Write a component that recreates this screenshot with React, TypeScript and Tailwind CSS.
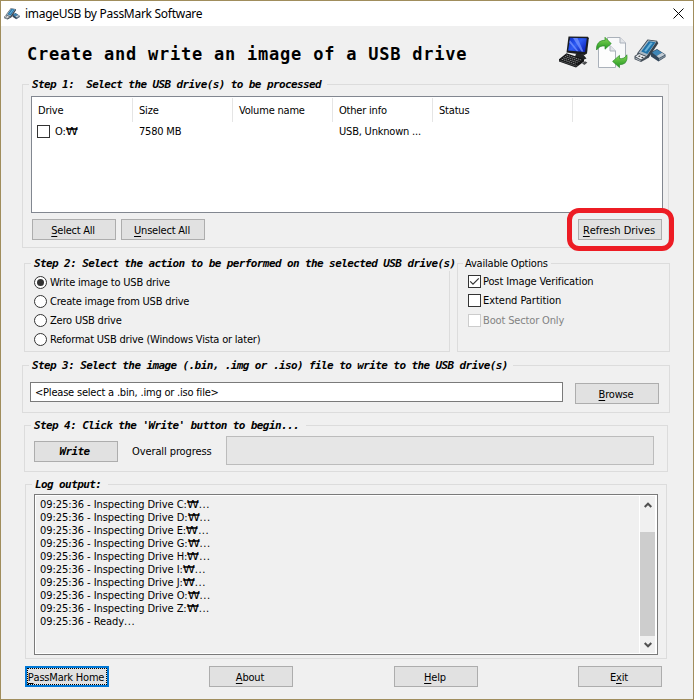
import type { ReactNode } from 'react';
import { clsx } from 'clsx';

const columns = [
  { label: 'Drive', value: 'O:', className: 'w-[101px]' },
  { label: 'Size', value: '7580 MB', className: 'w-[100px]' },
  { label: 'Volume name', value: '', className: 'w-[100px]' },
  { label: 'Other info', value: 'USB, Unknown ...', className: 'w-[100px]' },
  { label: 'Status', value: '', className: 'w-[140px]' },
];

const actions = [
  { label: 'Write image to USB drive', className: 'h-[19px]' },
  { label: 'Create image from USB drive', className: 'h-[18px]' },
  { label: 'Zero USB drive', className: 'h-[20px]' },
  { label: 'Reformat USB drive (Windows Vista or later)', className: 'h-[19px]' },
];

const drives = ['C', 'D', 'E', 'G', 'H', 'I', 'J', 'O', 'Z'];

const monoLabel =
  "font-['DejaVu_Sans_Mono'] text-[11px] font-bold italic tracking-[-0.6px]";

const Group = ({
  title,
  plain = false,
  className,
  legendClassName,
  children,
}: {
  title: string;
  plain?: boolean;
  className?: string;
  legendClassName?: string;
  children: ReactNode;
}) => (
  <section className={clsx('relative shrink-0 border border-[#dcdcdc]', className)}>
    <h2
      className={clsx(
        'absolute -top-[8px] h-[15px] whitespace-pre bg-[#f0f0f0] leading-[15px]',
        !plain && monoLabel,
        legendClassName,
      )}
    >
      {title}
    </h2>
    {children}
  </section>
);

const Button = ({
  text,
  hotkey = 0,
  className,
}: {
  text: string;
  hotkey?: number;
  className?: string;
}) => (
  <button
    className={clsx(
      'flex h-[21px] w-[84px] shrink-0 items-center justify-center whitespace-pre border border-[#adadad] bg-[#e1e1e1] pr-[2px] pt-px',
      className,
    )}
  >
    {text.slice(0, hotkey)}
    <span className="underline underline-offset-2">{text[hotkey]}</span>
    {text.slice(hotkey + 1)}
  </button>
);

const Won = () => (
  <span className="inline-flex w-[12px] justify-center">
    <span className="scale-x-125">₩</span>
  </span>
);

const Check = ({
  checked = false,
  disabled = false,
}: {
  checked?: boolean;
  disabled?: boolean;
}) => (
  <span
    className={clsx(
      'h-[13px] w-[13px] shrink-0 border bg-white',
      disabled ? 'border-[#cccccc]' : 'border-[#333333]',
    )}
  >
    {checked && (
      <svg viewBox="0 0 11 11" className="h-[11px] w-[11px]" fill="none">
        <path d="M1.2 5.3 4 8.1 9.8 2.3" stroke="#333" strokeWidth="1.2" />
      </svg>
    )}
  </span>
);

const Radio = ({ selected }: { selected: boolean }) => (
  <span className="flex h-[13px] w-[13px] shrink-0 items-center justify-center rounded-full border border-[#333333] bg-white">
    {selected && <span className="h-[7px] w-[7px] rounded-full bg-[#333333]" />}
  </span>
);

const UsbIcon = ({ className }: { className: string }) => (
  <svg viewBox="0 0 32 24" className={className}>
    <path d="M16.5 13.5 23 10 31.5 15.5V18L24.5 22.5 17 17.5Z" fill="#33475a" />
    <path d="M18 13.5 23 10.6 28 13.8 22.5 17Z" fill="#3f86b6" />
    <path d="M22.5 17 28 13.8 31 15.8 25 19Z" fill="#c2cdd6" />
    <path d="M25 19.5 31 16.5V17.8L25 21.4Z" fill="#7e8d99" />
    <path d="M13.5 0.5 23 1.8 24.3 4.2 14.5 19 11.5 20 3 14.5Z" fill="#38434e" />
    <path d="M14 1.2 22.6 2.4 12.4 17.4 4.2 14.2Z" fill="#a9b8c4" />
    <path d="M14.8 2.2 21.6 3.2 13.4 15 7.2 12.6Z" fill="#2072a8" />
    <path d="M16.6 3.6 18.8 3.9 12 12.8 10.2 12.1Z" fill="#6ab2d8" />
    <path d="M0.5 17 5 14 13 17.2 12.5 20 7 23 0.5 20.3Z" fill="#46505a" />
    <path d="M1.5 17.4 5.2 15 11.8 17.8 7 20.6Z" fill="#e8ebee" />
    <path d="M1.5 18.4 6.6 21.2V22.2L1.5 19.8Z" fill="#b7bec5" />
    <path d="M4 17.2 5.5 16.4 6.8 17 5.2 17.9ZM7 18.6 8.6 17.7 9.8 18.3 8.2 19.2Z" fill="#333" />
  </svg>
);

const ComputerIcon = () => (
  <svg viewBox="0 0 30 32" className="h-8 w-[30px]">
    <defs>
      <linearGradient id="screen" x1="0" y1="0" x2="1" y2="0.8">
        <stop offset="0" stopColor="#0b2fd0" />
        <stop offset="0.5" stopColor="#2f5df5" />
        <stop offset="1" stopColor="#0c1fb4" />
      </linearGradient>
    </defs>
    <path d="M9.5 0.5 29 0.8 29.8 2.2 28 17.5 25.5 19 7.5 16.5Z" fill="#1b1d20" />
    <path d="M11 1.8 27.8 2.2 26 16 9.2 14.4Z" fill="url(#screen)" />
    <path d="M14 2 18.5 2.1 24.5 15.8 22.5 15.6ZM10.8 4 19.5 15.3 17.5 15.1 10.2 6.5Z" fill="#7594ff" opacity="0.75" />
    <path d="M17 17.5 24 18.3 27.5 22.5 24 24 16 21Z" fill="#222426" />
    <path d="M0 23.2 7.5 17.2 25 23.2V25.6L17 31.4 0 25.6Z" fill="#131415" />
    <path d="M2.6 23.2 16.8 28.2M4.2 21.8 18.6 26.8M5.8 20.4 20.4 25.4M7.4 19 22.2 24" stroke="#a3a5a7" strokeWidth="0.8" strokeDasharray="1.7 0.7" />
    <path d="M0.5 24.6 16.8 30 18.5 29.2" stroke="#6c6e70" strokeWidth="0.6" fill="none" />
    <path d="M23 27.2 26 25.2 28.4 26.4 25.4 29Z" fill="#4c4e50" />
  </svg>
);

const PagesIcon = () => (
  <svg viewBox="0 0 32 33" className="h-[33px] w-8">
    <defs>
      <linearGradient id="arrow" x1="0" y1="0" x2="0" y2="1">
        <stop offset="0" stopColor="#86d955" />
        <stop offset="1" stopColor="#1f9420" />
      </linearGradient>
    </defs>
    <path d="M11.5 1.5H24L29.5 7V27H11.5Z" fill="#f8f9fa" stroke="#aab1ba" />
    <path d="M24 1.5V7H29.5" fill="#e2e5e9" stroke="#aab1ba" />
    <path d="M2.5 9.5H14L19.5 15V31.5H2.5Z" fill="#fdfdfd" stroke="#aab1ba" />
    <path d="M14 9.5V15H19.5" fill="#e2e5e9" stroke="#aab1ba" />
    <path d="M0.6 14C0 8 3.5 4 9 4.4V1.3L15.2 7.6 9 13.2V10C5.5 9.4 2.5 11 0.6 14Z" fill="url(#arrow)" stroke="#2a8a26" strokeWidth="0.7" />
    <path d="M30.8 18.8C32 25.5 28.5 28.8 23.5 28.6V31.6L16.6 25.4 23.5 19.4V22.6C26.5 22.9 29.5 22 30.8 18.8Z" fill="url(#arrow)" stroke="#2a8a26" strokeWidth="0.7" />
  </svg>
);

const Chevron = ({ down = false }: { down?: boolean }) => (
  <svg viewBox="0 0 8 6" className={clsx('h-[6px] w-2', down && 'rotate-180')} fill="none">
    <path d="M0.7 5 4 1.7 7.3 5" stroke="#505050" strokeWidth="2" />
  </svg>
);

export default function App() {
  return (
    <div className="h-[700px] w-[695px] overflow-hidden bg-white">
      <main className="flex h-[700px] w-[694px] flex-col border border-[#a08d5c] bg-[#f0f0f0] font-['DejaVu_Sans_Condensed','DejaVu_Sans',sans-serif] text-[11px] leading-[13px] tracking-[-0.2px] text-black">
        <header className="flex h-[25px] shrink-0 items-center bg-white pl-[3px] pr-[9px]">
          <UsbIcon className="h-3 w-4" />
          <span className="ml-[5px] flex-1 font-['Noto_Sans'] text-[12px] tracking-[-0.28px]">
            imageUSB by PassMark Software
          </span>
          <svg viewBox="0 0 11 11" className="h-[11px] w-[11px]">
            <path d="M0.5 0.5 10.5 10.5M10.5 0.5 0.5 10.5" stroke="#000" />
          </svg>
        </header>

        <div className="flex h-[58px] shrink-0 items-start pl-[26px] pt-[10px]">
          <h1 className="w-[532px] whitespace-nowrap pt-[8px] font-['DejaVu_Sans_Mono'] text-[17px] font-bold leading-[20px] tracking-[0.77px]">
            Create and write an image of a USB drive
          </h1>
          <ComputerIcon />
          <div className="ml-[7px]">
            <PagesIcon />
          </div>
          <UsbIcon className="ml-[6px] mt-[3px] h-6 w-8" />
        </div>

        <Group
          title="Step 1:  Select the USB drive(s) to be processed"
          className="ml-[21px] h-[164px] w-[647px] pl-[8px] pt-[11px]"
          legendClassName="left-[6px] w-[298px] pl-[3px]"
        >
          <div className="h-[117px] w-[632px] border border-[#828790] bg-white pt-px">
            <div className="flex h-[24px]">
              {columns.map((col) => (
                <div
                  key={col.label}
                  className={clsx('border-r border-[#e5e5e5] pl-[6px] pt-[6px]', col.className)}
                >
                  {col.label}
                </div>
              ))}
            </div>
            <div className="flex h-[18px] items-center">
              {columns.map((col, i) => (
                <div
                  key={col.label}
                  className={clsx(
                    'flex items-center whitespace-nowrap',
                    i === 0 ? 'pl-[5px]' : 'pl-[6px]',
                    col.className,
                  )}
                >
                  {i === 0 && <Check />}
                  <span className={clsx(i === 0 && 'pl-[5px]')}>{col.value}</span>
                  {i === 0 && <Won />}
                </div>
              ))}
            </div>
          </div>
          <div className="flex gap-[5px] pl-px pt-[6px]">
            <Button text="Select All" className="tracking-[-0.25px]" />
            <Button text="Unselect All" className="tracking-[-0.2px]" />
            <div className="relative ml-[368px]">
              <Button text="Refresh Drives" className="tracking-[-0.02px]" />
              <span className="absolute -left-[11px] -top-[11px] h-[43px] w-[107px] rounded-[12px] border-[5px] border-[#ed1c24]" />
            </div>
          </div>
        </Group>

        <div className="mt-[15px] flex gap-[7px] pl-[23px]">
          <Group
            title="Step 2: Select the action to be performed on the selected USB drive(s)"
            className="h-[89px] w-[426px] pl-[9px] pt-[9px]"
            legendClassName="left-[6px] z-10 w-[426px] pl-[3px]"
          >
            {actions.map((action, i) => (
              <label
                key={action.label}
                className={clsx('flex items-center gap-[3px]', action.className)}
              >
                <Radio selected={i === 0} />
                {action.label}
              </label>
            ))}
          </Group>
          <Group
            title="Available Options"
            plain
            className="h-[89px] w-[213px] pl-[10px] pt-[7px]"
            legendClassName="left-[5px] w-[88px] pl-[2px]"
          >
            <label className="flex h-[20px] items-center gap-[2px] tracking-[-0.13px]">
              <Check checked />
              Post Image Verification
            </label>
            <label className="flex h-[19px] items-center gap-[2px] tracking-[-0.05px]">
              <Check />
              Extend Partition
            </label>
            <label className="flex h-[20px] items-center gap-[2px] tracking-[-0.15px] text-[#838383]">
              <Check disabled />
              Boot Sector Only
            </label>
          </Group>
        </div>

        <Group
          title="Step 3: Select the image (.bin, .img or .iso) file to write to the USB drive(s)"
          className="ml-[21px] mt-[13px] h-[48px] w-[648px]"
          legendClassName="left-[6px] w-[484px] pl-[3px]"
        >
          <div className="flex items-start gap-[12px] pl-[7px] pt-[16px]">
            <div className="flex h-[20px] w-[533px] items-center border border-[#7a7a7a] bg-white pl-[4px]">
              {'<Please select a .bin, .img or .iso file>'}
            </div>
            <Button text="Browse" className="mt-px" />
          </div>
        </Group>

        <Group
          title="Step 4: Click the 'Write' button to begin..."
          className="ml-[23px] mt-[12px] h-[47px] w-[644px]"
          legendClassName="left-[6px] w-[275px] pl-[3px]"
        >
          <div className="flex pl-[9px] pt-[10px]">
            <button
              className={clsx(
                'mt-[5px] h-[21px] w-[84px] border border-[#adadad] bg-[#e1e1e1] pr-[3px]',
                monoLabel,
              )}
            >
              Write
            </button>
            <span className="ml-[14px] w-[94px] pt-[9px] tracking-[-0.1px]">Overall progress</span>
            <div className="h-[29px] w-[428px] border border-[#bcbcbc] bg-[#e6e6e6]" />
          </div>
        </Group>

        <Group
          title="Log output:"
          className="ml-[24px] mt-[12px] h-[175px] w-[642px] pl-[8px] pt-[9px]"
          legendClassName="left-[6px] w-[76px] pl-[3px]"
        >
          <div className="h-[161px] w-[624px] border border-[#7a7a7a] bg-white p-px">
            <div className="flex h-full bg-[#f0f0f0]">
              <div className="w-[603px] pl-[4px] pt-[2px] tracking-[-0.06px]">
                {drives.map((drive) => (
                  <p key={drive} className="h-[13px] whitespace-nowrap">
                    09:25:36 - Inspecting Drive {drive}:
                    <Won />
                    <span className="tracking-[0.6px]">...</span>
                  </p>
                ))}
                <p>
                  09:25:36 - Ready<span className="tracking-[0.6px]">...</span>
                </p>
              </div>
              <div className="flex w-[17px] flex-col items-center border-x border-white">
                <div className="flex h-[36px] pt-[6px]">
                  <Chevron />
                </div>
                <div className="h-[104px] w-full bg-[#cdcdcd]" />
                <div className="pt-[6px]">
                  <Chevron down />
                </div>
              </div>
            </div>
          </div>
        </Group>

        <footer className="mt-[7px] flex pl-[24px]">
          <div className="relative">
            <Button text="PassMark Home" className="!border-2 !border-[#0078d7]" />
            <span className="absolute inset-[2px] border border-dotted border-black" />
          </div>
          <Button text="About" className="ml-[100px]" />
          <Button text="Help" className="ml-[101px]" />
          <Button text="Exit" hotkey={1} className="ml-[100px]" />
        </footer>
      </main>
    </div>
  );
}
